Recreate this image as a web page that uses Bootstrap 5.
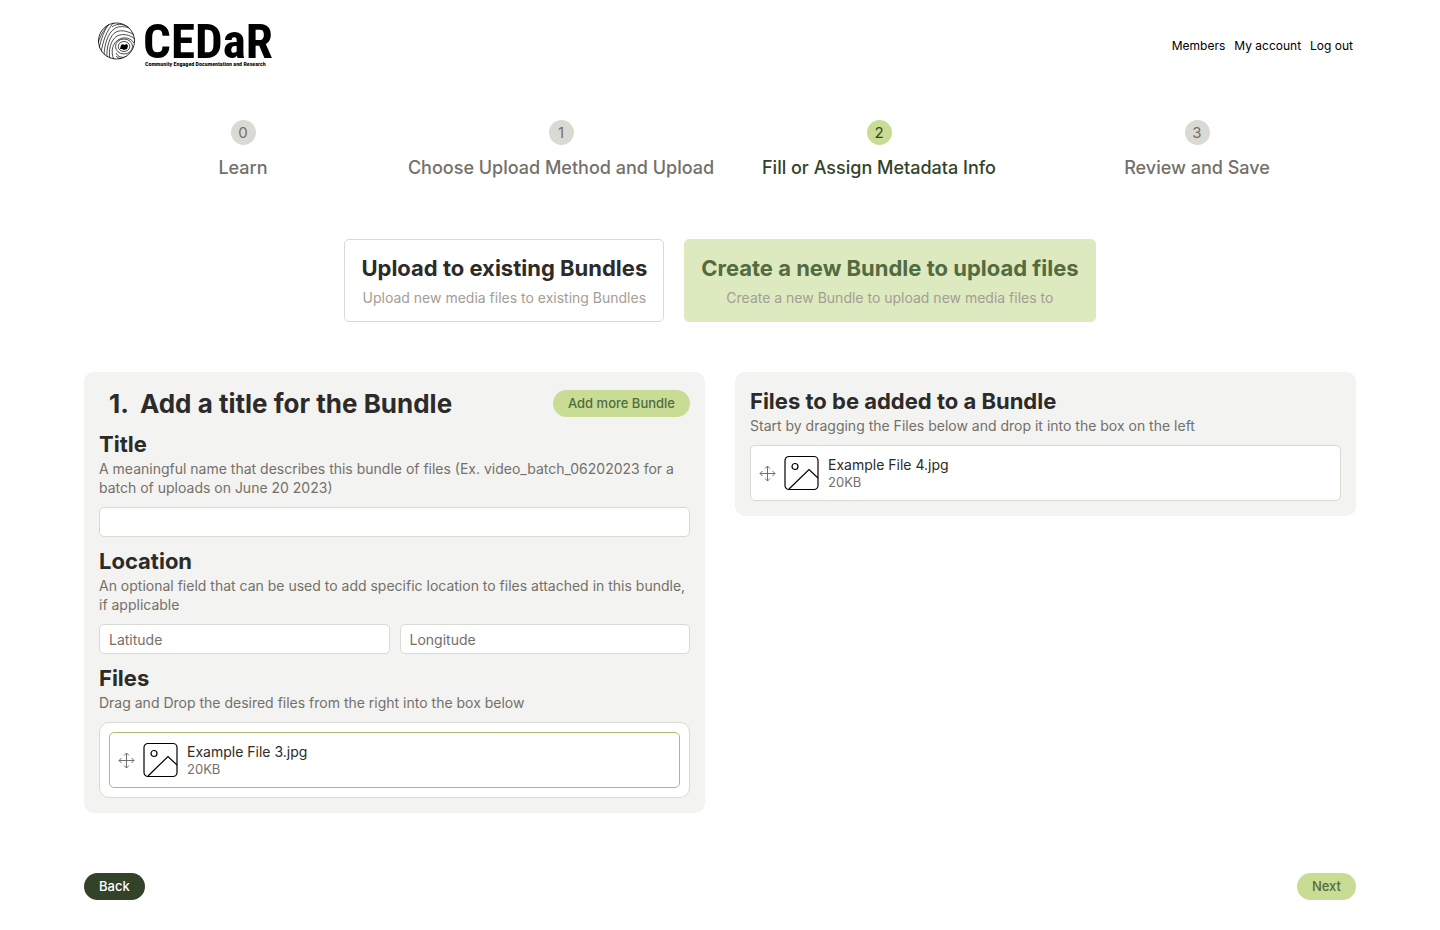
<!DOCTYPE html>
<html lang="en">
<head>
<meta charset="utf-8">
<meta name="viewport" content="width=device-width, initial-scale=1">
<title>CEDaR – Upload</title>
<link href="https://cdn.jsdelivr.net/npm/bootstrap@5.3.0/dist/css/bootstrap.min.css" rel="stylesheet">
<style>
  :root { --ink:#2c2b29; --muted:#737069; --soft:#a39e94; --line:#d8dad3; --panel:#f3f3f1; --lime:#c9dc94; --lime-soft:#dde9bf; --moss:#536b40; --forest:#32432a; }
  body { font-family: Inter, "Liberation Sans", sans-serif; font-size: 14px; line-height: 19px; color: var(--ink); background: #fff; }
  .page { max-width: 1320px; }
  h1, h2, h3, p { margin: 0; }
  .site-head { padding: 20px 3px 0 12px; height: 90px; }
  .site-nav a { color: #000; text-decoration: none; font-size: 12px; }
  .site-nav { gap: 9px; padding-top: 16px; }
  .steps { list-style: none; margin: 30px 0 0; padding: 0; }
  .step { flex: 1 1 0; min-width: 0; font-size: 18px; line-height: 24px; font-weight: 500; color: var(--muted); text-align: center; white-space: nowrap; }
  .step-num { width: 25px; height: 25px; border-radius: 50%; background: var(--line); font-size: 15px; font-weight: 400; margin: 0 auto 11px; }
  .step.current { color: var(--forest); }
  .step.current .step-num { background: var(--lime); }
  .choices { gap: 20px; margin-top: 59px; }
  .choice { border: 1px solid var(--line); border-radius: 5px; background: #fff; padding: 14px 16px; color: var(--ink); text-align: center; }
  .choice.current { background: var(--lime-soft); border-color: var(--lime-soft); color: var(--moss); }
  .choice small { display: block; margin-top: 5px; font-size: 14px; color: var(--soft); }
  .title-md { font-size: 22px; line-height: 29px; font-weight: 700; display: block; }
  .title-lg { font-size: 26px; line-height: 33px; font-weight: 700; padding-left: 10px; gap: 11px; }
  .panels { --bs-gutter-x: 30px; margin-top: 50px; }
  .panel { background: var(--panel); border-radius: 10px; padding: 15px; }
  .hint { color: var(--muted); }
  .field { height: 30px; padding: 0 9px; border: 1px solid var(--line); border-radius: 5px; font-size: 14px; color: var(--ink); min-width: 0; }
  .field::placeholder { color: var(--muted); opacity: 1; }
  .stack { gap: 10px; }
  .pill { border: 0; border-radius: 14px; height: 27px; padding: 0 15px; font-size: 13px; font-weight: 500; background: var(--lime); color: var(--moss); white-space: nowrap; }
  .pill.dark { background: var(--forest); color: #fff; }
  .drop { border: 1px solid var(--line); border-radius: 10px; background: #fff; padding: 9px; }
  .file { border: 1px solid var(--line); border-radius: 5px; background: #fff; height: 56px; padding: 0 8px; }
  .file.placed { border-color: #a9be75; }
  .file .meta { font-size: 13px; line-height: 17px; color: var(--muted); }
  .file svg { flex: none; }
  .foot { margin-top: 60px; padding-bottom: 30px; }
</style>
</head>
<body>
<div class="container-fluid page px-4">
  <header class="site-head d-flex justify-content-between">
    <a href="#" aria-label="CEDaR home">
      <svg width="190" height="52" viewBox="0 0 190 52">
        <defs><clipPath id="disc"><circle cx="20.500" cy="21" r="18.500"/></clipPath></defs>
        <g clip-path="url(#disc)" fill="none" stroke="#000" stroke-width=".7">
          <path d="M2 23C5 14 9 8 13 4M3 29C5 19 8 10 15 1M5 33C7 21 10 11 19 1M8 37C8 25 12 13 18 9C23 5 30 7 34 8M11 39C10 27 14 15 20 12C26 9 33 12 39 15M14 40C12 29 15 20 21 16C27 13 34 15 39 19M18 40C14 31 17 23 22 20C28 16 35 18 38 23M16 7C22 2 30 5 34 8"/>
          <ellipse cx="28" cy="26.500" rx="8.500" ry="7.500"/><ellipse cx="28" cy="26.500" rx="5.800" ry="5"/>
          <path d="M20 33C23 39 31 39 36 32M20 36C25 41 32 39 37 34"/>
        </g>
        <path d="M25 25l2-1 1 1 3-1 1 2-1 3-3 1-2-1-2 0z"/>
        <circle cx="20.500" cy="21" r="18" fill="none" stroke="#000" stroke-width=".8"/>
        <text x="47" y="38" font-family="'Roboto Condensed',Roboto,sans-serif" font-weight="700" font-size="49">CEDaR</text>
        <text x="49" y="46" font-family="'Roboto Condensed',Roboto,sans-serif" font-weight="700" font-size="6">Community Engaged Documentation and Research</text>
      </svg>
    </a>
    <nav class="site-nav d-flex align-items-start">
      <a href="#">Members</a><a href="#">My account</a><a href="#">Log out</a>
    </nav>
  </header>

  <ol class="steps d-flex">
    <li class="step"><div class="step-num d-flex align-items-center justify-content-center">0</div>Learn</li>
    <li class="step"><div class="step-num d-flex align-items-center justify-content-center">1</div>Choose Upload Method and Upload</li>
    <li class="step current" aria-current="step"><div class="step-num d-flex align-items-center justify-content-center">2</div>Fill or Assign Metadata Info</li>
    <li class="step"><div class="step-num d-flex align-items-center justify-content-center">3</div>Review and Save</li>
  </ol>

  <div class="choices d-flex justify-content-center">
    <button type="button" class="choice"><span class="title-md">Upload to existing Bundles</span><small>Upload new media files to existing Bundles</small></button>
    <button type="button" class="choice current"><span class="title-md">Create a new Bundle to upload files</span><small>Create a new Bundle to upload new media files to</small></button>
  </div>

  <main class="panels row align-items-start">
    <div class="col-6">
      <section class="panel d-flex flex-column stack">
        <div class="d-flex justify-content-between align-items-center">
          <h1 class="title-lg d-flex"><span>1.</span><span>Add a title for the Bundle</span></h1>
          <button type="button" class="pill">Add more Bundle</button>
        </div>
        <div>
          <label for="title" class="title-md">Title</label>
          <p class="hint">A meaningful name that describes this bundle of files (Ex. video_batch_06202023 for a batch of uploads on June 20 2023)</p>
        </div>
        <input id="title" type="text" class="field w-100">
        <div>
          <h2 class="title-md">Location</h2>
          <p class="hint">An optional field that can be used to add specific location to files attached in this bundle, if applicable</p>
        </div>
        <div class="d-flex stack">
          <input type="text" class="field flex-fill" placeholder="Latitude" aria-label="Latitude">
          <input type="text" class="field flex-fill" placeholder="Longitude" aria-label="Longitude">
        </div>
        <div>
          <h2 class="title-md">Files</h2>
          <p class="hint">Drag and Drop the desired files from the right into the box below</p>
        </div>
        <div class="drop">
          <div class="file placed d-flex align-items-center">
            <svg width="17" height="17" viewBox="0 0 17 17" fill="none" stroke="#737069"><path d="M8.500 1v15M1 8.500h15M6 3.500L8.500 1 11 3.500M6 13.500L8.500 16 11 13.500M3.500 6L1 8.500 3.500 11M13.500 6L16 8.500 13.500 11"/></svg>
            <svg class="ms-2 me-2" width="36" height="36" viewBox="0 0 36 36" fill="none" stroke="#000" stroke-width="1.200"><rect x="1" y="1.500" width="33" height="33" rx="4"/><circle cx="11" cy="11.500" r="3"/><path d="M5 34L25 14.500 34 23"/></svg>
            <div><div>Example File 3.jpg</div><div class="meta">20KB</div></div>
          </div>
        </div>
      </section>
    </div>
    <div class="col-6">
      <section class="panel d-flex flex-column stack">
        <div>
          <h2 class="title-md">Files to be added to a Bundle</h2>
          <p class="hint">Start by dragging the Files below and drop it into the box on the left</p>
        </div>
        <div class="file d-flex align-items-center">
          <svg width="17" height="17" viewBox="0 0 17 17" fill="none" stroke="#737069"><path d="M8.500 1v15M1 8.500h15M6 3.500L8.500 1 11 3.500M6 13.500L8.500 16 11 13.500M3.500 6L1 8.500 3.500 11M13.500 6L16 8.500 13.500 11"/></svg>
          <svg class="ms-2 me-2" width="36" height="36" viewBox="0 0 36 36" fill="none" stroke="#000" stroke-width="1.200"><rect x="1" y="1.500" width="33" height="33" rx="4"/><circle cx="11" cy="11.500" r="3"/><path d="M5 34L25 14.500 34 23"/></svg>
          <div><div>Example File 4.jpg</div><div class="meta">20KB</div></div>
        </div>
      </section>
    </div>
  </main>

  <footer class="foot d-flex justify-content-between">
    <button type="button" class="pill dark">Back</button>
    <button type="button" class="pill">Next</button>
  </footer>
</div>
<script src="https://cdn.jsdelivr.net/npm/bootstrap@5.3.0/dist/js/bootstrap.bundle.min.js"></script>
</body>
</html>
